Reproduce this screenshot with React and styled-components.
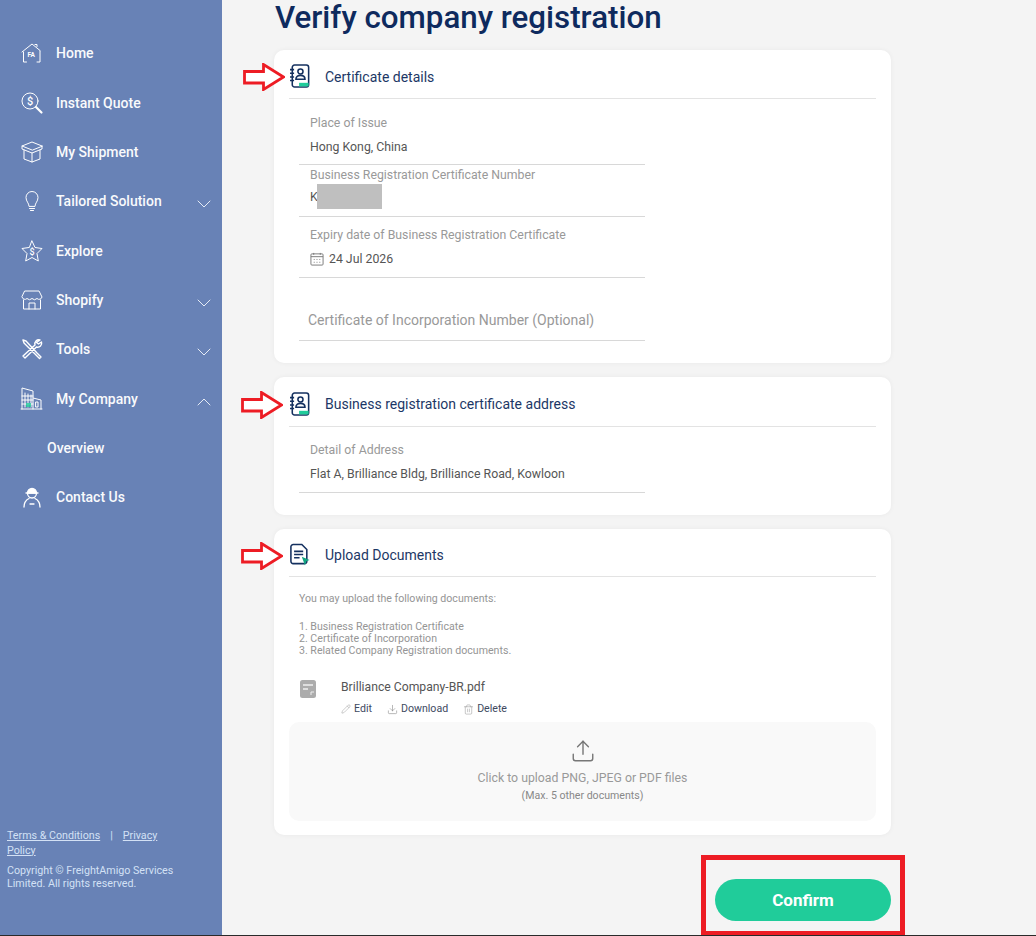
import React from "react";
import styled, { createGlobalStyle } from "styled-components";
import { ChevronDown, ChevronUp, Upload, Pencil, Download, Trash2 } from "lucide-react";

const Global = createGlobalStyle`
  html, body { margin: 0; padding: 0; height: 936px; overflow: hidden; background: #f4f4f4; }
  body { font-family: Roboto, "Liberation Sans", sans-serif; }
  * { box-sizing: border-box; }
`;
const Page = styled.div`display:flex;width:1036px;height:936px;overflow:hidden;border-bottom:1px solid #2a2a2a;`;
const Sidebar = styled.aside`width:222px;flex:none;background:#6882b6;display:flex;flex-direction:column;padding-top:28.5px;`;
const Nav = styled.nav`display:flex;flex-direction:column;`;
const NavItem = styled.div`height:49.35px;display:flex;align-items:center;padding-left:${p => p.$sub ? "47px" : "20px"};color:#fff;font-size:14px;font-weight:500;`;
const NavIcon = styled.span`width:24px;height:24px;margin-right:12px;flex:none;display:flex;align-items:center;justify-content:center;color:#fff;`;
const NavLabel = styled.span`flex:1;opacity:.96;`;
const Caret = styled.span`display:flex;margin-right:6px;margin-top:6px;color:#e6ecf6;`;
const Foot = styled.footer`margin-top:auto;padding:0 40px 45px 7px;font-size:10.7px;line-height:14.5px;color:#d3e1f5;`;
const FootLink = styled.span`text-decoration:underline;`;
const Sep = styled.span`margin:0 10px;`;
const Copy = styled.div`margin-top:6px;line-height:13px;`;
const Main = styled.main`flex:1;padding-left:52px;display:flex;flex-direction:column;align-items:flex-start;`;
const Title = styled.h1`margin:0 0 0 1px;height:50px;padding-top:1px;font-size:31.3px;line-height:34px;font-weight:500;color:#0e2a5e;`;
const Card = styled.section`width:617px;height:${p => p.$h}px;background:#fff;border-radius:10px;margin-bottom:14px;padding:0 15px;box-shadow:0 0 5px rgba(0,0,0,.05);`;
const CardHead = styled.header`position:relative;height:${p => p.$h}px;padding:5px 0 0 1px;border-bottom:1px solid #e3e3e3;display:flex;align-items:center;gap:15px;font-size:14px;color:#1c3766;`;
const HeadIcon = styled.span`display:flex;width:20px;height:26px;flex:none;align-items:center;margin-top:-1px;`;
const Arrow = styled.svg`position:absolute;left:${p => p.$left}px;top:${p => p.$top}px;width:42px;height:28px;`;
const Field = styled.div`width:346px;margin-left:10px;height:${p => p.$h}px;padding:${p => p.$pt}px 0 0 11px;border-bottom:1px solid #d8d8d8;`;
const Label = styled.div`font-size:12.3px;line-height:14px;color:#999;`;
const Value = styled.div`display:flex;align-items:center;font-size:12.3px;line-height:14px;color:#555;height:${p => p.$h || 14}px;margin-top:${p => p.$mt}px;gap:5px;`;
const Masked = styled.div`display:flex;align-items:center;font-size:12.3px;color:#555;margin-top:2px;`;
const Redact = styled.span`display:block;width:65px;height:25px;margin-left:-1px;background:#bfbfbf;`;
const OptLabel = styled.div`font-size:14px;line-height:16px;color:#999;margin-left:-2px;`;
const Hint = styled.div`margin:16px 0 0 10px;font-size:10.6px;line-height:12px;color:#959595;`;
const Gap = styled.div`height:16px;`;
const FileRow = styled.div`display:flex;margin:23px 0 0 11px;height:42px;`;
const FileIcon = styled.span`width:16px;height:18px;margin-right:25px;flex:none;display:flex;`;
const FileInfo = styled.div`display:flex;flex-direction:column;`;
const FileName = styled.div`font-size:12.2px;line-height:14px;color:#555;`;
const Actions = styled.div`display:flex;gap:15px;margin-top:9px;font-size:10.6px;line-height:12px;color:#3e4a5f;`;
const Action = styled.span`display:flex;align-items:center;gap:3px;svg{color:#888;}`;
const Drop = styled.div`height:99px;background:#f9f9f9;border-radius:10px;display:flex;flex-direction:column;align-items:center;padding-top:16px;color:#999;`;
const DropText = styled.div`font-size:12.3px;line-height:14px;margin-top:7px;`;
const DropSub = styled.div`font-size:10.6px;line-height:12px;margin-top:5px;color:#888;`;
const ConfirmRow = styled.div`position:relative;width:617px;display:flex;justify-content:flex-end;margin-top:30px;`;
const ConfirmBtn = styled.button`width:176px;height:42px;border:0;border-radius:21px;background:#20cc9a;color:#fff;font:700 17px Roboto,"Liberation Sans",sans-serif;`;
const RedBox = styled.div`position:absolute;left:427px;top:-24px;width:204px;height:81px;border:5px solid #ed1c24;`;

const s = { fill: "none", stroke: "#fff", strokeWidth: 1, strokeLinecap: "round", strokeLinejoin: "round" };
const HomeI = () => <svg width="24" height="24" viewBox="0 0 24 24" {...s}><path d="M2 11 12 3l8 6.500M3.500 11v10h3M20 10v11h-3M15 3.500h2v2"/><text x="7.500" y="16" fontSize="6.500" fill="#fff" stroke="none" fontFamily="Roboto" fontWeight="700">FA</text></svg>;
const QuoteI = () => <svg width="24" height="24" viewBox="0 0 24 24" {...s}><circle cx="10" cy="10" r="8"/><path d="M16 16l5.500 5.500" strokeWidth="2.200"/><text x="7" y="14" fontSize="11" fill="#fff" stroke="none" fontFamily="Roboto" fontWeight="500">$</text></svg>;
const BoxI = () => <svg width="24" height="24" viewBox="0 0 24 24" {...s}><path d="M12 10 2 6l10-4 10 4zM2 6v3l10 4 10-4V6M4 10v9l8 3 8-3v-9M12 13v9"/></svg>;
const BulbI = () => <svg width="24" height="24" viewBox="0 0 24 24" {...s}><path d="M9 17c0-3-3-4.500-3-8.500a6 6 0 0 1 12 0c0 4-3 5.500-3 8.500zM9.500 19.500h5M10.500 21.500h3"/></svg>;
const StarI = () => <svg width="24" height="24" viewBox="0 0 24 24" {...s}><path d="m12 2 3 6.500 7 1-5 5 1.300 7.500L12 18.500 5.700 22 7 14.500l-5-5 7-1z"/><text x="9.500" y="16" fontSize="9" fill="#fff" stroke="none" fontFamily="Roboto" fontWeight="500">$</text></svg>;
const ShopI = () => <svg width="24" height="24" viewBox="0 0 24 24" {...s}><path d="M5 3h14l3 6a3 3 0 0 1-5 1.500 3.500 3.500 0 0 1-5 0 3.500 3.500 0 0 1-5 0A3 3 0 0 1 2 9zM3.500 12v9h17v-9M9 21v-6h6v6"/></svg>;
const ToolsI = () => <svg width="24" height="24" viewBox="0 0 24 24" {...s} strokeWidth="1.400"><path d="M3 3l3 1 11 12 4 4-1.500 1.500-4-4L4 6zM20 3a4 4 0 0 0-5 5L3 19l2 2L16.500 10A4 4 0 0 0 21.500 5l-3 2-2-1.500z"/></svg>;
const BuildI = () => <svg width="24" height="24" viewBox="0 0 24 24" {...s}><path d="M2 22V1l11 3v18M13 11l8 2v9M1 22h21M5 6v14M8 7v13M11 8v12M2 9h11M2 13h11M2 17h11M16 15h2v5h-2z"/><rect x="6" y="16" width="5" height="4" fill="#20cc9a" stroke="none" opacity=".8"/></svg>;
const AgentI = () => <svg width="24" height="24" viewBox="0 0 24 24" {...s} strokeWidth="1.300"><path d="M7.500 8a4.500 4.500 0 0 1 9 0z" fill="#fff"/><path d="M7.500 8c0 3 2 5 4.500 5s4.500-2 4.500-5M6 8h12M4 22c0-5 3-7.500 5-8.500M20 22c0-5-3-7.500-5-8.500M10 19h4"/></svg>;
const ContactBook = () => <svg width="22" height="26" viewBox="0 0 22 26" fill="none" stroke="#14305f" strokeWidth="1.700"><rect x="2.500" y="1" width="18" height="24" rx="2.500"/><path d="M0 6h4.500M0 10h4.500M0 14h4.500M0 18h4.500"/><circle cx="11.500" cy="8" r="2.800"/><path d="M6.500 16.500c0-3 2-4.200 5-4.200s5 1.200 5 4.200z"/><path d="M10 20.500h10.500V24.500H10z" fill="#20cc9a" stroke="none"/></svg>;
const DocI = () => <svg width="22" height="26" viewBox="0 0 22 26" fill="none" stroke="#14305f" strokeWidth="1.700"><path d="M1 4a2.500 2.500 0 0 1 2.500-2.500H13L18.500 7v13a2.500 2.500 0 0 1-2.500 2.500H3.500A2.500 2.500 0 0 1 1 20z"/><path d="M4.500 9h10M4.500 12.500h10M4.500 16h6"/><path d="M13 15l8.500 3.500-3.500 1.500-1.500 4.500z" fill="#12a581" stroke="none"/></svg>;
const FileI = () => <svg width="16" height="18" viewBox="0 0 16 18"><rect width="16" height="18" rx="2.500" fill="#acacac"/><path d="M3 5h10M3 9h5" stroke="#eee" strokeWidth="1.500"/><path d="M11 15v-3h3" fill="none" stroke="#eee"/></svg>;
const CalI = () => <svg width="14" height="14" viewBox="0 0 15 15" fill="none" stroke="#777"><rect x="1" y="2" width="13" height="12" rx="1"/><path d="M1 5h13M4 1v2M11 1v2M4 8h1M7 8h1M10 8h1M4 11h1M7 11h1M10 11h1"/></svg>;
const RedArrow = ({ top, left }) => <Arrow $top={top} $left={left} viewBox="0 0 42 28"><path d="M1.500 8.500h19V1.500l20 12.500-20 12.500V20H1.500z" fill="#fff" stroke="#ed1c24" strokeWidth="2.800"/></Arrow>;

const nav = [
  [HomeI, "Home"], [QuoteI, "Instant Quote"], [BoxI, "My Shipment"], [BulbI, "Tailored Solution", "d"],
  [StarI, "Explore"], [ShopI, "Shopify", "d"], [ToolsI, "Tools", "d"], [BuildI, "My Company", "u"],
  [null, "Overview"], [AgentI, "Contact Us"],
];

export default function App() {
  return (
    <Page>
      <Global />
      <Sidebar>
        <Nav>
          {nav.map(([I, label, c]) => (
            <NavItem key={label} $sub={!I}>
              {I && <NavIcon><I /></NavIcon>}
              <NavLabel>{label}</NavLabel>
              {c && <Caret>{c === "d" ? <ChevronDown size={24} strokeWidth={1} /> : <ChevronUp size={24} strokeWidth={1} />}</Caret>}
            </NavItem>
          ))}
        </Nav>
        <Foot>
          <FootLink>Terms &amp; Conditions</FootLink><Sep>|</Sep><FootLink>Privacy Policy</FootLink>
          <Copy>Copyright © FreightAmigo Services Limited. All rights reserved.</Copy>
        </Foot>
      </Sidebar>
      <Main>
        <Title>Verify company registration</Title>
        <Card $h={313}>
          <CardHead $h={49}><RedArrow top={13} left={-46} /><HeadIcon><ContactBook /></HeadIcon>Certificate details</CardHead>
          <Field $h={66} $pt={17}><Label>Place of Issue</Label><Value $mt={10}>Hong Kong, China</Value></Field>
          <Field $h={52} $pt={3}><Label>Business Registration Certificate Number</Label><Masked>K<Redact /></Masked></Field>
          <Field $h={61} $pt={11}><Label>Expiry date of Business Registration Certificate</Label><Value $mt={9} $h={16}><CalI />24 Jul 2026</Value></Field>
          <Field $h={63} $pt={34}><OptLabel>Certificate of Incorporation Number (Optional)</OptLabel></Field>
        </Card>
        <Card $h={138}>
          <CardHead $h={50}><RedArrow top={14} left={-48} /><HeadIcon><ContactBook /></HeadIcon>Business registration certificate address</CardHead>
          <Field $h={66} $pt={16}><Label>Detail of Address</Label><Value $mt={10}>Flat A, Brilliance Bldg, Brilliance Road, Kowloon</Value></Field>
        </Card>
        <Card $h={306}>
          <CardHead $h={48}><RedArrow top={13} left={-48} /><HeadIcon><DocI /></HeadIcon>Upload Documents</CardHead>
          <Hint>You may upload the following documents:<Gap />1. Business Registration Certificate<br />2. Certificate of Incorporation<br />3. Related Company Registration documents.</Hint>
          <FileRow>
            <FileIcon><FileI /></FileIcon>
            <FileInfo>
              <FileName>Brilliance Company-BR.pdf</FileName>
              <Actions>
                <Action><Pencil size={10} strokeWidth={1} />Edit</Action>
                <Action><Download size={11} strokeWidth={1.300} />Download</Action>
                <Action><Trash2 size={11} strokeWidth={1} />Delete</Action>
              </Actions>
            </FileInfo>
          </FileRow>
          <Drop>
            <Upload size={26} strokeWidth={1.300} color="#777" />
            <DropText>Click to upload PNG, JPEG or PDF files</DropText>
            <DropSub>(Max. 5 other documents)</DropSub>
          </Drop>
        </Card>
        <ConfirmRow><RedBox /><ConfirmBtn>Confirm</ConfirmBtn></ConfirmRow>
      </Main>
    </Page>
  );
}
